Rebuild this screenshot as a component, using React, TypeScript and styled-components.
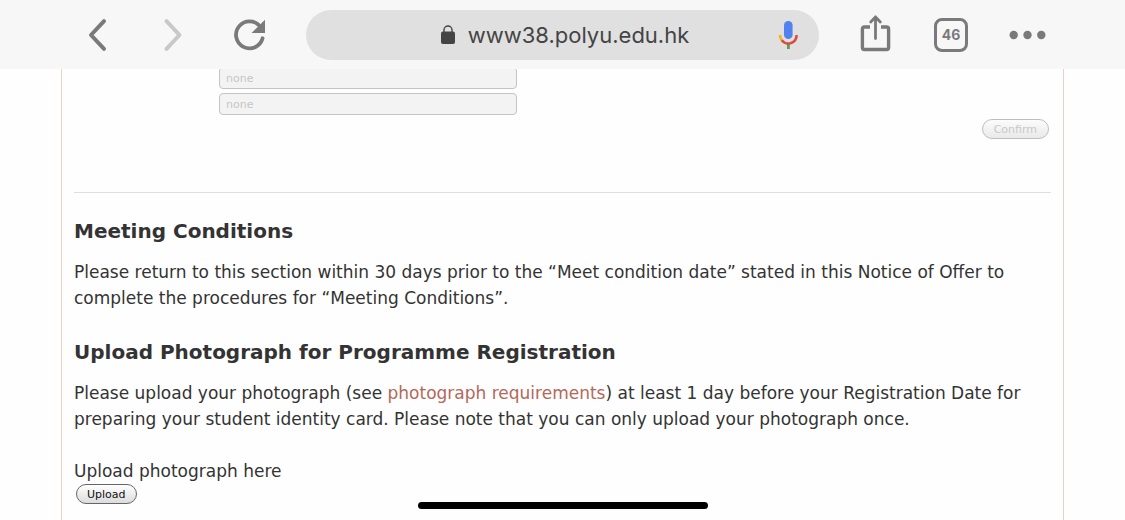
import React from "react";
import styled, { createGlobalStyle } from "styled-components";

const GlobalStyle = createGlobalStyle`
  * { box-sizing: border-box; }
  body {
    margin: 0;
    background: #fefefe;
    color: #333;
    font-family: "DejaVu Sans", Verdana, sans-serif;
    overflow: hidden;
  }
`;

const Toolbar = styled.header`
  position: fixed;
  top: 0;
  left: 0;
  right: 0;
  z-index: 1;
  display: flex;
  align-items: center;
  gap: 18px;
  height: 69px;
  padding: 0 60px;
  background: #f7f7f7;
`;

const ToolGroup = styled.nav`
  display: flex;
`;

const ToolButton = styled.button<{ $faded?: boolean }>`
  display: flex;
  align-items: center;
  justify-content: center;
  width: 76px;
  height: 50px;
  padding: 0;
  border: 0;
  background: none;
  color: ${(p) => (p.$faded ? "#c8c8c8" : "#7a7a7a")};
`;

const AddressBar = styled.div`
  display: grid;
  grid-template-columns: 60px 1fr 60px;
  align-items: center;
  flex: 1;
  height: 50px;
  border-radius: 25px;
  background: #e0e0e0;
`;

const Address = styled.button`
  grid-column: 2;
  display: flex;
  align-items: center;
  justify-content: center;
  gap: 12px;
  padding: 0 0 0 4px;
  border: 0;
  background: none;
  color: #444;
  font: 22px/30px Inter, "Liberation Sans", sans-serif;
`;

const VoiceButton = styled.button`
  display: flex;
  justify-content: center;
  padding: 0;
  border: 0;
  background: none;
`;

const Page = styled.main`
  min-height: 100vh;
  margin: 0 61px;
  padding: 67px 12px 0;
  border: solid #e6d3c8;
  border-width: 0 1px;
`;

const OfferForm = styled.form`
  display: flex;
  flex-direction: column;
  align-items: flex-start;
  gap: 4px;
  padding-bottom: 53px;
  border-bottom: 1px solid #dedede;
`;

const Field = styled.input`
  width: 298px;
  height: 22px;
  margin-left: 145px;
  padding: 0 6px;
  border: 1px solid #c4c4c4;
  border-radius: 4px;
  background: #f3f3f3;
  color: #c6c6c6;
  font: 11px "DejaVu Sans", Verdana, sans-serif;
`;

const PillButton = styled.button`
  display: block;
  height: 20px;
  padding: 0 10px;
  border: 1px solid #666;
  border-radius: 10px;
  background: linear-gradient(#fff, #dcdcdc);
  color: #111;
  font: 11px "DejaVu Sans", Verdana, sans-serif;

  &:disabled {
    padding: 0 11px;
    border-color: #bdbdbd;
    background: linear-gradient(#fcfcfc, #e9e9e9);
    color: #c8c8c8;
  }
`;

const FormActions = styled.div`
  align-self: flex-end;
  padding-right: 2px;
`;

const Section = styled.section`
  padding-top: 23px;
`;

const Heading = styled.h2`
  margin: 0 0 13px;
  font-size: 20px;
  line-height: 30px;
  font-weight: 700;
`;

const Text = styled.p`
  margin: 0 0 3px;
  font-size: 17px;
  line-height: 26px;
`;

const TextLink = styled.a`
  color: #b5675a;
  text-decoration: none;
`;

const UploadArea = styled.div`
  padding-top: 23px;

  ${PillButton} {
    margin-left: 2px;
  }
`;

const UploadLabel = styled.label`
  display: block;
  font-size: 17px;
  line-height: 26px;
`;

const HomeIndicator = styled.div`
  position: fixed;
  bottom: 11px;
  left: 50%;
  width: 290px;
  height: 7px;
  border-radius: 4px;
  background: #000;
  transform: translateX(-50%);
`;

const BackIcon = () => (
  <svg width="36" height="36" viewBox="0 0 36 36" fill="none" stroke="currentColor" strokeWidth="4" strokeLinecap="round" strokeLinejoin="round">
    <path d="M24 4.200 11 18 24 31.800" />
  </svg>
);

const ForwardIcon = () => (
  <svg width="36" height="36" viewBox="0 0 36 36" fill="none" stroke="currentColor" strokeWidth="4" strokeLinecap="round" strokeLinejoin="round">
    <path d="M10.500 4.200 23.500 18 10.500 31.800" />
  </svg>
);

const ReloadIcon = () => (
  <svg width="36" height="36" viewBox="0 0 36 36" fill="none">
    <path d="M30.600 21.300A13.500 13.500 0 1 1 28 9.300" stroke="currentColor" strokeWidth="3.800" strokeLinecap="round" />
    <path d="M33 2.800V16H19.500Z" fill="currentColor" />
  </svg>
);

const LockIcon = () => (
  <svg width="16" height="20" viewBox="0 0 16 20" fill="none">
    <rect x="1" y="6.500" width="14" height="12.500" rx="2" fill="#444" />
    <path d="M4 8V5a4 4 0 0 1 8 0v3" stroke="#444" strokeWidth="1.4" />
  </svg>
);

const MicIcon = () => (
  <svg width="22" height="30" viewBox="0.700 0 22 30" fill="none">
    <rect x="6.700" y="1" width="8.600" height="18" rx="4.300" fill="#5282ee" />
    <path d="M9.700 23h2.800v6H9.700z" fill="#4aa753" />
    <path d="M2.700 15c0 2.500 1 4.700 2.700 6.200" stroke="#f1b52c" strokeWidth="2.600" />
    <path d="M4.500 20.300A8.300 8.300 0 0 0 19.300 15" stroke="#dc4d3e" strokeWidth="2.600" />
  </svg>
);

const ShareIcon = () => (
  <svg width="34" height="40" viewBox="0 0 34 40" fill="none" stroke="currentColor" strokeWidth="3.400" strokeLinejoin="round">
    <path d="M12 12H6.400Q4.400 12 4.400 14V32.500Q4.400 34.500 6.400 34.500H28.600Q30.600 34.500 30.600 32.500V14Q30.600 12 28.600 12H23" />
    <path d="M17.500 23.500V2M12.700 7 17.500 2 22.300 7" strokeWidth="2.800" strokeLinecap="round" />
  </svg>
);

const TabCount = styled.span`
  display: flex;
  align-items: center;
  justify-content: center;
  width: 34px;
  height: 34px;
  border: 3px solid currentColor;
  border-radius: 8px;
  font: 700 14px Inter, "Liberation Sans", sans-serif;
`;

const MoreIcon = () => (
  <svg width="38" height="10" viewBox="0 0 38 10" fill="currentColor">
    <circle cx="5.700" cy="5" r="4.200" />
    <circle cx="19.500" cy="5" r="4.200" />
    <circle cx="33.300" cy="5" r="4.200" />
  </svg>
);

export default function App() {
  return (
    <>
      <GlobalStyle />
      <Toolbar>
        <ToolGroup aria-label="Navigation">
          <ToolButton aria-label="Back"><BackIcon /></ToolButton>
          <ToolButton aria-label="Forward" $faded><ForwardIcon /></ToolButton>
          <ToolButton aria-label="Reload"><ReloadIcon /></ToolButton>
        </ToolGroup>
        <AddressBar>
          <Address><LockIcon />www38.polyu.edu.hk</Address>
          <VoiceButton aria-label="Voice search"><MicIcon /></VoiceButton>
        </AddressBar>
        <ToolGroup aria-label="Browser tools">
          <ToolButton aria-label="Share"><ShareIcon /></ToolButton>
          <ToolButton aria-label="Tabs"><TabCount>46</TabCount></ToolButton>
          <ToolButton aria-label="More"><MoreIcon /></ToolButton>
        </ToolGroup>
      </Toolbar>
      <Page>
        <OfferForm>
          <Field aria-label="First condition" defaultValue="none" disabled />
          <Field aria-label="Second condition" defaultValue="none" disabled />
          <FormActions><PillButton disabled>Confirm</PillButton></FormActions>
        </OfferForm>
        <Section>
          <Heading>Meeting Conditions</Heading>
          <Text>
            Please return to this section within 30 days prior to the “Meet condition date” stated in this Notice of Offer to
            complete the procedures for “Meeting Conditions”.
          </Text>
        </Section>
        <Section>
          <Heading>Upload Photograph for Programme Registration</Heading>
          <Text>
            Please upload your photograph (see <TextLink href="#requirements">photograph requirements</TextLink>) at least 1 day
            before your Registration Date for preparing your student identity card. Please note that you can only upload your
            photograph once.
          </Text>
          <UploadArea>
            <UploadLabel htmlFor="upload">Upload photograph here</UploadLabel>
            <PillButton id="upload" type="button">Upload</PillButton>
          </UploadArea>
        </Section>
      </Page>
      <HomeIndicator />
    </>
  );
}
